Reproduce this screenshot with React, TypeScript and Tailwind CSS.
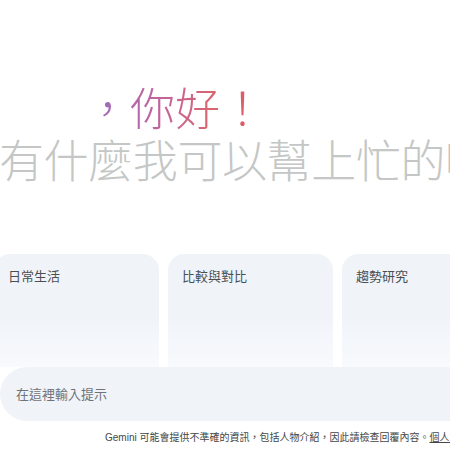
import React from "react";

const cjk = { fontFamily: '"Noto Sans CJK TC", "Noto Sans", sans-serif' };
const ui = { fontFamily: '"Liberation Sans", "Noto Sans CJK TC", sans-serif' };

const cards = ["日常生活", "比較與對比", "趨勢研究"];

export default function App() {
  return (
    <div lang="zh-Hant-TW" className="w-[450px] h-[450px] overflow-hidden bg-white" style={cjk}>
      <div className="pt-[81px] whitespace-nowrap">
        <div className="h-[52px] leading-[52px] text-[45px] font-light pl-[85px]">
          <span className="bg-[linear-gradient(90deg,#a06ab8_8%,#c0649f_40%,#d96570_70%,#e0575f_100%)] bg-clip-text text-transparent">
            ，你好！
          </span>
        </div>
        <div className="h-[52px] leading-[52px] text-[45px] font-light tracking-[-0.4px] text-[#c4c7c5] ml-[-1px]">
          有什麼我可以幫上忙的嗎？
        </div>
      </div>

      <div className="mt-[69px] ml-[-6px] flex gap-[9px]">
        {cards.map((c) => (
          <div
            key={c}
            className="w-[165px] h-[113px] shrink-0 rounded-t-[16px] bg-[linear-gradient(180deg,#f0f4f9_0%,#f0f4f9_55%,#f8fafd_100%)] pl-[14px] pt-[12px] text-[13px] leading-[20px] text-[#4b4f52]"
          >
            {c}
          </div>
        ))}
      </div>

      <div className="w-[640px] h-[54px] rounded-full bg-[#f0f4f9] flex items-center pl-[16px] text-[13px] text-[#6f7377]">
        在這裡輸入提示
      </div>

      <div
        className="mt-[9px] pl-[105px] whitespace-nowrap text-[10px] leading-[16px] text-[#444746]"
        style={ui}
      >
        Gemini 可能會提供不準確的資訊，包括人物介紹，因此請檢查回覆內容。
        <span className="underline">個人資料與 Gemini 應用程式</span>
      </div>
    </div>
  );
}
